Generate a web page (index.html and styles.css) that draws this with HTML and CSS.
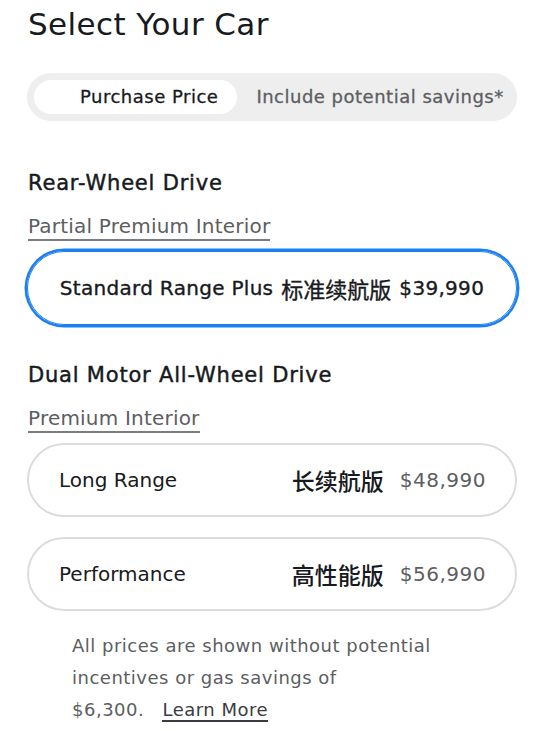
FILE: index.html
```html
<!DOCTYPE html>
<html lang="en">
<head>
<meta charset="utf-8">
<title>Select Your Car</title>
<link rel="stylesheet" href="styles.css">
</head>
<body>
<main class="page">
  <h1 class="title">Select Your Car</h1>

  <div class="toggle">
    <button class="toggle-opt toggle-opt--active">Purchase Price</button>
    <button class="toggle-opt">Include potential savings*</button>
  </div>

  <section class="group">
    <h2 class="group-title">Rear-Wheel Drive</h2>
    <div class="interior"><a class="interior-link">Partial Premium Interior</a></div>
    <div class="card card--selected">
      <span class="card-name">Standard Range Plus</span>
      <span class="card-cn">标准续航版</span>
      <span class="card-price">$39,990</span>
    </div>
  </section>

  <section class="group group--second">
    <h2 class="group-title">Dual Motor All-Wheel Drive</h2>
    <div class="interior"><a class="interior-link">Premium Interior</a></div>
    <div class="card">
      <span class="card-name">Long Range</span>
      <span class="card-right">
        <span class="card-cn">长续航版</span>
        <span class="card-price">$48,990</span>
      </span>
    </div>
    <div class="card card--gap">
      <span class="card-name">Performance</span>
      <span class="card-right">
        <span class="card-cn">高性能版</span>
        <span class="card-price">$56,990</span>
      </span>
    </div>
  </section>

  <p class="note">All prices are shown without potential incentives or gas savings of <span class="nowrap">$6,300. <a class="learn">Learn More</a></span></p>
</main>
</body>
</html>
```

FILE: styles.css
```css
html, body {
  margin: 0;
  padding: 0;
  background: #ffffff;
}

body {
  font-family: "DejaVu Sans", "Noto Sans CJK SC", sans-serif;
  color: #171a20;
}

.page {
  padding: 0 27px;
}

.title {
  margin: 4px 0 0 1px;
  font-size: 31px;
  line-height: 40px;
  font-weight: 400;
  letter-spacing: 0.4px;
  color: #171a20;
}

.toggle {
  margin-top: 29px;
  display: flex;
  height: 48px;
  box-sizing: border-box;
  padding: 7px;
  background: #eeeeee;
  border-radius: 24px;
}

.toggle-opt {
  border: 0;
  background: transparent;
  font-family: inherit;
  font-size: 18px;
  letter-spacing: 0.5px;
  line-height: 34px;
  height: 34px;
  padding: 0 0 0 19px;
  color: #5c5e62;
  -webkit-text-stroke: 0.3px currentColor;
  border-radius: 17px;
  white-space: nowrap;
}

.toggle-opt--active {
  background: #ffffff;
  color: #171a20;
  padding: 0 19px 0 46px;
}

.group {
  margin-top: 50px;
}

.group--second {
  margin-top: 38px;
}

.group-title {
  margin: 0 0 0 1px;
  font-size: 21px;
  line-height: 24px;
  font-weight: 400;
  letter-spacing: 0.8px;
  -webkit-text-stroke: 0.45px currentColor;
  color: #171a20;
}

.interior {
  margin: 19px 0 0 1px;
  font-size: 20px;
  line-height: 24px;
  letter-spacing: 0.2px;
}

.interior-link {
  color: #5c5e62;
  padding-bottom: 1px;
  border-bottom: 2px solid #7a7c80;
}

.card {
  margin-top: 13px;
  height: 74px;
  box-sizing: border-box;
  border: 2px solid #dcdcdc;
  border-radius: 37px;
  padding: 0 29px 0 30px;
  display: flex;
  align-items: center;
  justify-content: space-between;
  font-size: 20px;
  line-height: 24px;
}

.card--gap {
  margin-top: 20px;
}

.card--selected {
  border: 1px solid #1a7ff0;
  box-shadow: 0 0 0 2.5px #1a7ff0;
  justify-content: center;
  gap: 8px;
  padding: 0;
  -webkit-text-stroke: 0.35px currentColor;
}

.card--selected .card-name {
  letter-spacing: 0.3px;
}

.card-name {
  color: #171a20;
}

.card-right {
  display: flex;
  align-items: center;
  gap: 16px;
}

.card-cn {
  font-family: "Noto Sans CJK SC", sans-serif;
  font-size: 23px;
  font-weight: 500;
  color: #171a20;
}

.card-price {
  color: #5c5e62;
  letter-spacing: 0.5px;
}

.card--selected .card-price,
.card--selected .card-cn {
  color: #171a20;
  letter-spacing: 0.3px;
}

.card--selected .card-cn {
  font-size: 22px;
  font-weight: 400;
  letter-spacing: 0;
}

.note {
  margin: 19px 0 0 45px;
  font-size: 18px;
  line-height: 32px;
  letter-spacing: 0.5px;
  color: #5c5e62;
  max-width: 400px;
}

.nowrap {
  white-space: nowrap;
}

.learn {
  margin-left: 12px;
  color: #393c41;
  border-bottom: 2px solid #393c41;
}
```
